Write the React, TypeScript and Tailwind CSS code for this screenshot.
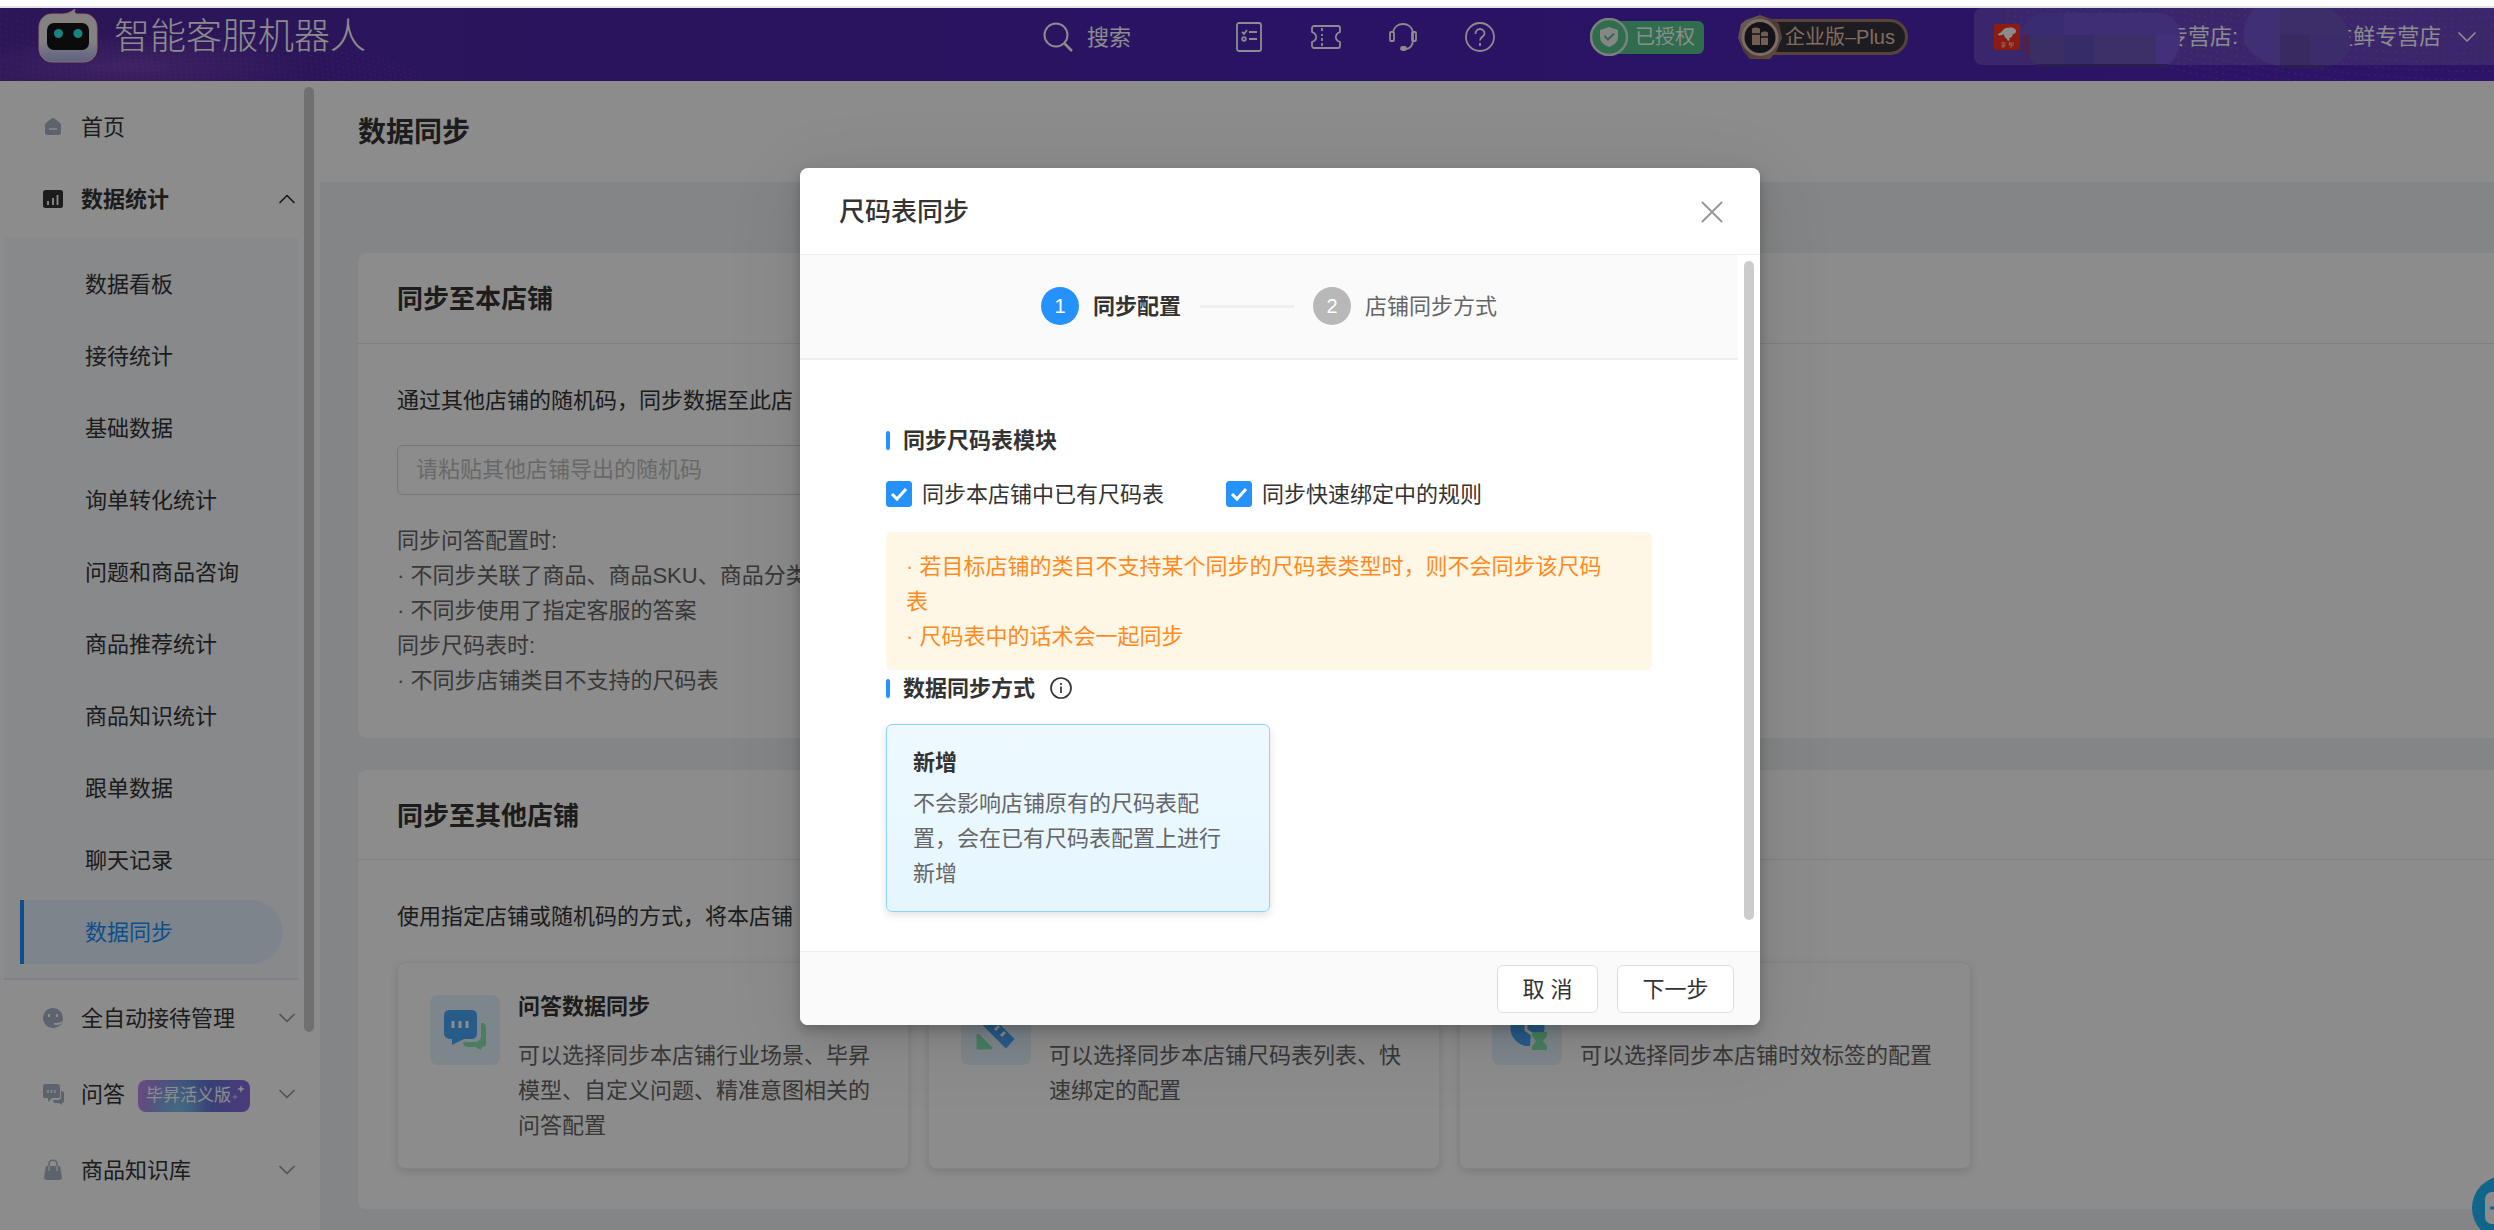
import React from "react";
import { ChevronDown, ChevronUp } from "lucide-react";

const submenu = [
  "数据看板",
  "接待统计",
  "基础数据",
  "询单转化统计",
  "问题和商品咨询",
  "商品推荐统计",
  "商品知识统计",
  "跟单数据",
  "聊天记录",
  "数据同步",
];

function RobotLogo() {
  return (
    <svg className="h-[54px] w-[60px] shrink-0" viewBox="0 0 60 54" aria-hidden="true">
      <defs>
        <linearGradient id="robot" x1="0" y1="0" x2="0" y2="1">
          <stop offset="0" stopColor="#f3ece9" />
          <stop offset="0.6" stopColor="#ededf1" />
          <stop offset="1" stopColor="#a9b2ea" />
        </linearGradient>
      </defs>
      <path
        d="M14 5h9c5 0 9-1 14-5-1 3 0 5 3 5h6c8 0 13 6 13 14v19c0 9-5 15-14 15H15C6 53 1 47 1 38V19C1 11 6 5 14 5Z"
        fill="url(#robot)"
        stroke="#ffc9bd"
        strokeWidth="1"
      />
      <rect x="9" y="14" width="42" height="27" rx="7" fill="#141414" />
      <circle cx="20.500" cy="24.500" r="4.500" fill="#2cf0e6" />
      <circle cx="40" cy="24.500" r="4.500" fill="#2cf0e6" />
    </svg>
  );
}

function HeaderTexture({ side }: { side: "left" | "right" }) {
  const rows = Array.from({ length: 13 }, (_, i) => i);
  const left = side === "left";
  return (
    <svg
      className={
        left
          ? "pointer-events-none absolute top-0 left-0 h-full w-[460px]"
          : "pointer-events-none absolute top-0 right-0 h-full w-[560px]"
      }
      viewBox="0 0 460 73"
      preserveAspectRatio="none"
      aria-hidden="true"
    >
      {rows.map((i) =>
        left ? (
          <path
            key={i}
            d={`M0 ${4 + i * 6}C60 ${14 + i * 6} 100 ${46 + i * 3} 160 ${34 + i * 4}S300 ${16 + i * 6} 420 ${66 + i * 4}`}
            fill="none"
            stroke="#a56bf0"
            strokeOpacity="0.22"
            strokeWidth="1.500"
            strokeDasharray="1.500 4"
          />
        ) : (
          <path
            key={i}
            d={`M60 ${-40 + i * 6}C180 ${-20 + i * 5} 280 ${10 + i * 8} 460 ${i * 9}`}
            fill="none"
            stroke="#b69af5"
            strokeOpacity="0.2"
            strokeWidth="1.500"
            strokeDasharray="1.500 4"
          />
        ),
      )}
    </svg>
  );
}

function ShopButton() {
  return (
    <button
      type="button"
      className="relative flex h-[57px] w-[520px] shrink-0 items-center self-start rounded-l-lg bg-white/15 pl-5 text-[22px] text-white"
    >
      <svg className="size-[26px] shrink-0" viewBox="0 0 26 26" aria-hidden="true">
        <rect width="26" height="26" rx="2" fill="#ff3220" />
        <path
          d="M4 10c2-1 4-2 5-4 3-3 9-3 12-1 2 2 1 5-2 5-1 3-2 4-4 4l1 2-2 1-2-3c-2-1-2-3-2-4-2 1-4 2-6 1Z"
          fill="#fff"
        />
        <path
          d="M7 19h5M9 18v1M8 21h3v1H8ZM9 22v2M15 19h5M16 18l-1 3h5M17 20v4"
          stroke="#ffd9d4"
          strokeWidth="0.8"
          fill="none"
        />
      </svg>
      <span className="ml-[146px] whitespace-nowrap">专营店:</span>
      <span className="ml-[93px] whitespace-nowrap">生鲜专营店</span>
      <ChevronDown className="ml-[10px] size-8 shrink-0" strokeWidth={1.3} aria-hidden="true" />
      <svg className="absolute top-0 left-12 h-[62px] w-[330px]" viewBox="0 0 330 62" aria-hidden="true">
        <defs>
          <clipPath id="blob-a">
            <path d="M20 5H140C152 8 158 18 158 30S152 55 142 59H18C6 50 0 44 0 30S8 8 20 5Z" />
          </clipPath>
          <clipPath id="blob-b">
            <path d="M234 0H304C320 6 328 18 328 36C328 50 312 60 292 60H264C240 56 222 42 222 30S224 6 234 0Z" />
          </clipPath>
        </defs>
        <g clipPath="url(#blob-a)">
          <rect width="160" height="62" fill="#7455d8" />
          <rect width="42" height="27" fill="#6b50d0" />
          <rect y="27" width="10" height="32" fill="#8e3e88" />
          <rect x="8" y="27" width="36" height="32" fill="#6c55b8" />
          <rect x="42" y="27" width="30" height="32" fill="#6250be" />
          <rect x="72" y="27" width="62" height="32" fill="#6f58bf" />
          <rect x="134" y="27" width="26" height="32" fill="#7a58e0" />
          <rect y="56" width="160" height="4" fill="#4b3694" />
        </g>
        <g clipPath="url(#blob-b)">
          <rect x="220" width="110" height="62" fill="#7556cf" />
          <rect x="258" width="70" height="27" fill="#6f53c0" />
          <rect x="258" y="27" width="30" height="35" fill="#684db2" />
          <rect x="288" y="27" width="40" height="35" fill="#6e50c4" />
          <rect x="220" y="57" width="110" height="4" fill="#4b3694" />
        </g>
      </svg>
    </button>
  );
}

function Header() {
  return (
    <header className="relative flex h-[73px] shrink-0 items-start overflow-hidden bg-gradient-to-r from-[#50289f] via-[#4c24b6] to-[#5426bb] text-white">
      <div className="pointer-events-none absolute inset-y-0 left-0 w-[460px] bg-[radial-gradient(ellipse_at_28%_80%,#7440b4_0%,transparent_40%)]" />
      <HeaderTexture side="left" />
      <HeaderTexture side="right" />
      <a href="#home" className="relative flex items-center pl-[38px]">
        <RobotLogo />
        <span className="ml-4 pt-[2px] text-[36px] leading-[54px] font-light whitespace-nowrap">智能客服机器人</span>
      </a>
      <div className="relative ml-auto flex items-center">
        <button type="button" className="flex h-[58px] items-center gap-[14px]">
          <svg className="size-[30px]" viewBox="0 0 30 30" fill="none" stroke="#fff" strokeWidth="2" aria-hidden="true">
            <circle cx="13" cy="13" r="11.500" />
            <path d="m21 21 8 8" strokeWidth="2.500" />
          </svg>
          <span className="text-[22px] whitespace-nowrap">搜索</span>
        </button>
        <div className="ml-[103px] flex items-center gap-[47px]">
          <button type="button" aria-label="任务列表">
            <svg className="size-[30px]" viewBox="0 0 30 30" fill="none" stroke="#fff" strokeWidth="1.800" aria-hidden="true">
              <rect x="3" y="1" width="24" height="28" rx="2" />
              <path d="m8 10 2 2 3-4M15 10h8M15 17h8" />
              <circle cx="10" cy="17" r="1.800" />
            </svg>
          </button>
          <button type="button" aria-label="工单">
            <svg className="size-[30px]" viewBox="0 0 30 30" fill="none" stroke="#fff" strokeWidth="1.800" aria-hidden="true">
              <path d="M3 4h24c1 0 2 1 2 2v4l-2 1c-3 2-3 6 0 8l2 1v4c0 1-1 2-2 2H3c-1 0-2-1-2-2v-4l2-1c3-2 3-6 0-8l-2-1V6c0-1 1-2 2-2Z" />
              <path d="M11 6v3M11 12v2M11 16v3M11 21v3" />
            </svg>
          </button>
          <button type="button" aria-label="客服">
            <svg className="size-[30px]" viewBox="0 0 30 30" fill="none" stroke="#fff" strokeWidth="1.800" aria-hidden="true">
              <path d="M5 10C6 5 10 2 15 2s9 3 10 8v8c0 5-3 9-7 9" />
              <rect x="2" y="10" width="4" height="9" rx="1" />
              <rect x="24" y="10" width="4" height="9" rx="1" />
              <rect x="13" y="25" width="5" height="3" rx="1.500" fill="#fff" />
            </svg>
          </button>
          <button type="button" aria-label="帮助">
            <svg className="size-[30px]" viewBox="0 0 30 30" fill="none" stroke="#fff" strokeWidth="1.800" aria-hidden="true">
              <circle cx="15" cy="15" r="14" />
              <path d="M10.500 12c0-3 2-5 4.500-5s4.500 2 4.500 4.500c0 3-4.500 3.500-4.500 7M15 21v3" />
            </svg>
          </button>
        </div>
        <div className="ml-[95px] flex items-center">
          <svg className="z-10 size-[38px]" viewBox="0 0 38 38" aria-hidden="true">
            <circle cx="19" cy="19" r="18" fill="#56c68c" stroke="#dfe8e3" strokeWidth="2.500" />
            <path d="m19 9 9 3v7c0 5-4 8-9 10-5-2-9-5-9-10v-7Z" fill="#f2f5f3" />
            <path d="m14.500 18 3.500 3.500 6-6" fill="none" stroke="#56c68c" strokeWidth="2" />
          </svg>
          <span className="-ml-4 rounded-md bg-[#56c68c] pr-[9px] pl-[23px] text-[20px] leading-[33px] whitespace-nowrap">
            已授权
          </span>
        </div>
        <div className="ml-[33px] flex items-center">
          <svg className="z-10 h-[46px] w-[46px]" viewBox="0 0 46 46" aria-hidden="true">
            <defs>
              <linearGradient id="bronze" x1="0" y1="0" x2="1" y2="1">
                <stop offset="0" stopColor="#d9c0b1" />
                <stop offset="0.500" stopColor="#8e6a59" />
                <stop offset="1" stopColor="#b78c74" />
              </linearGradient>
            </defs>
            <path d="M23 1 37 6l5 4 3 14-6 14-6 7H13l-6-7L1 24 4 10l5-4Z" fill="url(#bronze)" />
            <circle cx="23" cy="23.500" r="17" fill="#26262c" stroke="#dcc6ba" strokeWidth="3" />
            <path d="M15 15c0-2 7-2 8 0v16h-8ZM24 19c1-2 7-2 7 0v12h-7Z" fill="#d2aa96" />
            <path d="M15 20h8M24 23h7" stroke="#26262c" strokeWidth="1.500" />
          </svg>
          <span className="-ml-5 rounded-r-full border-[3px] border-[#a07a66] bg-[#34333d] pr-[10px] pl-[19px] text-[20px] leading-[30px] whitespace-nowrap text-[#eac5b0]">
            企业版–Plus
          </span>
        </div>
        <div className="ml-[66px] flex h-[58px]">
          <ShopButton />
        </div>
      </div>
    </header>
  );
}

function NavIcon({ name }: { name: "home" | "stats" | "auto" | "qa" | "goods" }) {
  return (
    <svg className="size-[22px] shrink-0" viewBox="0 0 22 22" fill="#a9b4c6" aria-hidden="true">
      {name === "home" && (
        <>
          <path d="M11 2c1 0 2 1 6 4 1 1 2 2 2 3v8c0 1-1 2-3 2H6c-2 0-3-1-3-2V9c0-1 1-2 2-3 4-3 5-4 6-4Z" />
          <path d="M7 13h8" stroke="#f4f6fa" strokeWidth="1.600" />
        </>
      )}
      {name === "stats" && (
        <>
          <rect x="1" y="2" width="20" height="18" rx="2.500" fill="#333" />
          <path d="M6 13v4M11 10v7M15.500 7v10" stroke="#fff" strokeWidth="1.800" />
        </>
      )}
      {name === "auto" && (
        <>
          <path d="M11 1a10 10 0 1 0 6 18c3-1 4-4 4-8A10 10 0 0 0 11 1Z" />
          <path d="M7 7v3M15 7v3" stroke="#fff" strokeWidth="2" />
          <path d="M12 16c3 0 6 0 9-2-1 4-5 4-7 4-2 0-3-1-2-2Z" fill="#fff" />
        </>
      )}
      {name === "qa" && (
        <>
          <path d="M3 1h12c2 0 3 1 3 3v9c0 2-1 2-2 2h-6l-4 4v-4H3c-2 0-2-1-2-2V4c0-2 1-3 2-3Z" />
          <path d="M6 7v3M9.500 7v3M13 7v3" stroke="#fff" strokeWidth="1.500" />
          <path d="M19 8c2 0 3 1 3 2v8c0 1-1 2-2 2v2l-3-2h-4c-1 0-2-1-2-3h5c2 0 3-1 3-3Z" />
        </>
      )}
      {name === "goods" && (
        <>
          <path d="M4 7h14l2 11c0 2-1 3-3 3H5c-2 0-3-1-3-3Z" />
          <path d="M7 12V5c0-5 8-5 8 0v7" fill="none" stroke="#a9b4c6" strokeWidth="1.500" />
          <path d="M7 7v5M15 7v5" stroke="#fff" strokeWidth="1.200" />
        </>
      )}
    </svg>
  );
}

function NavGroup({
  icon,
  label,
  children,
}: {
  icon: "auto" | "qa" | "goods";
  label: string;
  children?: React.ReactNode;
}) {
  return (
    <button type="button" className="flex h-[76px] w-full items-center pr-px pl-[42px] text-left">
      <NavIcon name={icon} />
      <span className="ml-[17px]">{label}</span>
      {children}
      <ChevronDown className="ml-auto size-7 text-[#999]" strokeWidth={1.5} aria-hidden="true" />
    </button>
  );
}

function Sidebar() {
  return (
    <aside className="flex w-80 shrink-0 bg-white text-[22px] text-[#333]">
      <nav className="flex-1 pt-[10px] pl-1 [&>button]:-ml-1 [&>button]:w-[302px]">
        <a href="#home" className="flex h-[72px] items-center pl-[38px]">
          <NavIcon name="home" />
          <span className="ml-[17px]">首页</span>
        </a>
        <button type="button" className="flex h-[72px] items-center pr-px pl-[42px] font-bold">
          <NavIcon name="stats" />
          <span className="ml-[17px]">数据统计</span>
          <ChevronUp className="ml-auto size-7" strokeWidth={1.5} aria-hidden="true" />
        </button>
        <ul className="mt-[2px] w-[294px] border-b-2 border-[#e8ecf5] bg-[#f7f9fc] pt-[11px] pb-[10px]">
          {submenu.map((item) => (
            <li key={item} className="py-1 pl-4">
              <a
                href={`#${item}`}
                aria-current={item === "数据同步" ? "page" : undefined}
                className={
                  item === "数据同步"
                    ? "flex h-16 w-[263px] items-center rounded-r-full border-l-4 border-[#1890ff] bg-[#e4f1ff] pl-[61px] text-[#1890ff]"
                    : "flex h-16 w-[263px] items-center pl-[65px]"
                }
              >
                {item}
              </a>
            </li>
          ))}
        </ul>
        <NavGroup icon="auto" label="全自动接待管理" />
        <NavGroup icon="qa" label="问答">
          <span className="mt-1 ml-[13px] flex h-8 w-28 items-center rounded-lg bg-[radial-gradient(circle_at_35%_95%,#7fc4ee_0%,transparent_45%),linear-gradient(100deg,#c58ae8_0%,#6a8fe4_42%,#6474d8_62%,#8f6ae2_100%)] pl-2 text-[17px] text-white">
            毕昇活义版
            <svg className="mb-2 size-4" viewBox="0 0 16 16" fill="#fff" aria-hidden="true">
              <path d="m10 1 1 3 3 1-3 1-1 3-1-3-3-1 3-1Z" />
              <path d="m4 10 1 2 2 1-2 1-1 2-1-2-2-1 2-1Z" opacity="0.5" />
            </svg>
          </span>
        </NavGroup>
        <NavGroup icon="goods" label="商品知识库" />
      </nav>
      <div className="mt-[6px] mr-[6px] h-[945px] w-[10px] rounded-full bg-[#ccc]" />
    </aside>
  );
}

function CardIcon({ name }: { name: "chat" | "ruler" | "clock" }) {
  return (
    <span className="mt-[6px] flex size-[70px] shrink-0 items-center justify-center rounded-lg bg-[#e3f4fd]">
      <svg className="size-[44px]" viewBox="0 0 44 44" aria-hidden="true">
        {name === "chat" && (
          <>
            <path d="M38 15c4 0 5 2 5 5v15c0 2-1 4-4 4l-1 3-6-3h-6c-4 0-6-2-6-5h11c4 0 7-2 7-6Z" fill="#85e5ad" />
            <path d="M7 2h21c4 0 6 2 6 6v17c0 4-2 6-6 6h-7l-12 6v-6c-5 0-8-2-8-6V8c0-4 2-6 6-6Z" fill="#47a8fb" />
            <path d="M10 13v7M17 13v7M24 13v7" stroke="#fff" strokeWidth="3" />
          </>
        )}
        {name === "ruler" && (
          <>
            <path d="M4 40V27l13 13ZM40 4v10L30 4Z" fill="#85e5ad" stroke="#85e5ad" strokeWidth="3" strokeLinejoin="round" />
            <path d="M12 1 42 31 32 42 2 12Z" fill="#47a8fb" stroke="#e3f4fd" strokeWidth="2" strokeLinejoin="round" />
            <path d="m19 12-4 4m10 2-4 4m10 2-4 4" stroke="#fff" strokeWidth="3" />
          </>
        )}
        {name === "clock" && (
          <>
            <path d="M22 2a18 18 0 1 0 3 36l1-14h13A18 18 0 0 0 22 2Z" fill="#47a8fb" />
            <path d="M21 8v14l7 5" stroke="#fff" strokeWidth="3" fill="none" />
            <path d="M27 24h15v4l-4 5 4 5v4H27v-4l4-5-4-5Z" fill="#85e5ad" />
          </>
        )}
      </svg>
    </span>
  );
}

function SyncCard({ icon, title, text }: { icon: "chat" | "ruler" | "clock"; title: string; text: string }) {
  return (
    <article className="flex w-[512px] gap-[18px] rounded-lg border border-[#f0f0f0] bg-white px-8 pt-[26px] pb-[25px] shadow-[0_3px_8px_rgba(0,0,0,0.12)]">
      <CardIcon name={icon} />
      <div className="min-w-0 flex-1 text-[22px] leading-[35px]">
        <h3 className="font-bold text-[#333]">{title}</h3>
        <p className="mt-[14px] text-[#666]">{text}</p>
      </div>
    </article>
  );
}

function Content() {
  return (
    <main className="min-w-0 flex-1 bg-[#f0f2f5] text-[22px] leading-[35px] text-[#333]">
      <div className="flex h-[101px] items-center bg-white pt-[2px] pl-[38px]">
        <h1 className="text-[28px] font-bold">数据同步</h1>
      </div>
      <div className="flex flex-col gap-8 pt-[71px] pl-[38px]">
        <section className="rounded-l-lg bg-white">
          <h2 className="border-b border-[#e8eaed] pt-[29px] pb-[26px] pl-[39px] text-[26px] font-bold">
            同步至本店铺
          </h2>
          <div className="px-[39px] pt-[39px] pb-10">
            <label htmlFor="random-code" className="block">
              通过其他店铺的随机码，同步数据至此店
            </label>
            <input
              id="random-code"
              type="text"
              placeholder="请粘贴其他店铺导出的随机码"
              className="mt-[27px] block h-[50px] w-full max-w-[1000px] rounded-md border border-[#d9d9d9] bg-white px-[18px] placeholder:text-[#bfbfbf]"
            />
            <div className="mt-7 text-[#666]">
              <p>同步问答配置时:</p>
              <p>· 不同步关联了商品、商品SKU、商品分类</p>
              <p>· 不同步使用了指定客服的答案</p>
              <p>同步尺码表时:</p>
              <p>· 不同步店铺类目不支持的尺码表</p>
            </div>
          </div>
        </section>
        <section className="rounded-l-lg bg-white">
          <h2 className="border-b border-[#e8eaed] pt-[29px] pb-[25px] pl-[39px] text-[26px] font-bold">
            同步至其他店铺
          </h2>
          <div className="px-[39px] pt-[39px] pb-10">
            <p>使用指定店铺或随机码的方式，将本店铺</p>
            <div className="mt-7 flex flex-wrap gap-[19px]">
              <SyncCard
                icon="chat"
                title="问答数据同步"
                text="可以选择同步本店铺行业场景、毕昇模型、自定义问题、精准意图相关的问答配置"
              />
              <SyncCard icon="ruler" title="尺码表同步" text="可以选择同步本店铺尺码表列表、快速绑定的配置" />
              <SyncCard icon="clock" title="时效" text="可以选择同步本店铺时效标签的配置" />
            </div>
          </div>
        </section>
      </div>
    </main>
  );
}

function SectionTitle({ children }: { children: React.ReactNode }) {
  return (
    <h3 className="flex h-[30px] items-center font-bold">
      <span className="mr-[13px] h-[19px] w-1 rounded-sm bg-[#2592fc]" />
      {children}
    </h3>
  );
}

function CheckOption({ id, label }: { id: string; label: string }) {
  return (
    <label htmlFor={id} className="flex h-[30px] items-center gap-[10px]">
      <span className="grid">
        <input
          id={id}
          type="checkbox"
          defaultChecked
          className="peer col-start-1 row-start-1 size-[26px] appearance-none rounded-[3px] border border-[#d9d9d9] bg-white checked:border-[#2592fc] checked:bg-[#2592fc]"
        />
        <svg
          className="pointer-events-none invisible col-start-1 row-start-1 size-[26px] peer-checked:visible"
          viewBox="0 0 26 26"
          fill="none"
          aria-hidden="true"
        >
          <path d="m6 13 5 5 9-10" stroke="#fff" strokeWidth="3" />
        </svg>
      </span>
      {label}
    </label>
  );
}

function SyncDialog() {
  return (
    <div
      role="dialog"
      aria-modal="true"
      aria-labelledby="dialog-title"
      className="flex w-[960px] flex-col overflow-hidden rounded-lg bg-white text-[22px] text-[#333] shadow-[0_10px_26px_rgba(0,0,0,0.12),0_5px_10px_rgba(0,0,0,0.16),0_14px_80px_10px_rgba(0,0,0,0.06)]"
    >
      <div className="flex h-[87px] items-center justify-between border-b border-[#eee] pt-[2px] pr-9 pl-[39px]">
        <h2 id="dialog-title" className="text-[26px] font-medium">
          尺码表同步
        </h2>
        <button type="button" aria-label="关闭">
          <svg className="size-6" viewBox="0 0 24 24" stroke="#999" strokeWidth="2" aria-hidden="true">
            <path d="m2 2 20 20M22 2 2 22" />
          </svg>
        </button>
      </div>
      <div className="flex">
        <div className="min-w-0 flex-1">
          <ol className="flex items-center justify-center border-b-2 border-[#eee] bg-[#fafafa] pt-8 pb-[33px]">
            <li className="flex items-center gap-[14px] font-bold" aria-current="step">
              <span className="flex size-[38px] items-center justify-center rounded-full bg-[#2592fc] text-[20px] font-normal text-white">
                1
              </span>
              同步配置
            </li>
            <li className="mx-[19px] h-[3px] w-[94px] bg-[#eee]" aria-hidden="true" />
            <li className="flex items-center gap-[14px] text-[#666]">
              <span className="flex size-[38px] items-center justify-center rounded-full bg-[#b8b8b8] text-[20px] text-white">
                2
              </span>
              店铺同步方式
            </li>
          </ol>
          <div className="px-[86px] pt-[65px] pb-[39px]">
            <SectionTitle>同步尺码表模块</SectionTitle>
            <div className="mt-6 flex gap-[62px]">
              <CheckOption id="existing" label="同步本店铺中已有尺码表" />
              <CheckOption id="rules" label="同步快速绑定中的规则" />
            </div>
            <div className="mt-[23px] rounded-md bg-[#fff7e6] pt-[17px] pr-10 pb-4 pl-5 leading-[35px] text-[#ff8a1f]">
              <p>· 若目标店铺的类目不支持某个同步的尺码表类型时，则不会同步该尺码表</p>
              <p>· 尺码表中的话术会一起同步</p>
            </div>
            <div className="mt-[3px] flex items-center gap-[15px]">
              <SectionTitle>数据同步方式</SectionTitle>
              <button type="button" aria-label="同步方式说明">
                <svg className="size-[22px]" viewBox="0 0 22 22" fill="none" stroke="#333" strokeWidth="1.700" aria-hidden="true">
                  <circle cx="11" cy="11" r="10" />
                  <path d="M11 9.500V16M11 6v2" />
                </svg>
              </button>
            </div>
            <button
              type="button"
              aria-pressed="true"
              className="mt-[21px] block w-[384px] rounded-md border border-[#8ad4ff] bg-gradient-to-b from-[#eef9ff] to-[#e5f6ff] py-5 pr-10 pl-[26px] text-left leading-[35px] shadow-[0_3px_8px_rgba(0,0,0,0.12)]"
            >
              <span className="block font-bold">新增</span>
              <span className="mt-[6px] block text-[#666]">
                不会影响店铺原有的尺码表配置，会在已有尺码表配置上进行新增
              </span>
            </button>
          </div>
        </div>
        <div className="mx-[6px] mt-[6px] mb-[31px] w-[10px] rounded-full bg-[#ccc]" />
      </div>
      <div className="flex items-center justify-end gap-[19px] border-t border-[#eee] bg-[#fafafa] pt-[13px] pr-[26px] pb-3">
        <button type="button" className="h-12 w-[101px] rounded-md border border-[#ddd] bg-white whitespace-nowrap">
          取 消
        </button>
        <button type="button" className="h-12 w-[117px] rounded-md border border-[#ddd] bg-white whitespace-nowrap">
          下一步
        </button>
      </div>
    </div>
  );
}

export default function App() {
  return (
    <div className="flex h-screen flex-col overflow-hidden bg-white font-['Liberation_Sans','Noto_Sans_CJK_SC',sans-serif]">
      <div className="h-2 shrink-0 border-b-2 border-[#e0e5e1]" />
      <div className="relative flex min-h-0 flex-1 flex-col overflow-hidden">
        <Header />
        <div className="flex min-h-0 flex-1">
          <Sidebar />
          <Content />
        </div>
        <button
          type="button"
          aria-label="在线客服"
          className="absolute -right-[42px] -bottom-[10px] flex size-16 items-center justify-start rounded-full bg-[#20b8fb] pl-[13px]"
        >
          <svg className="h-8 w-9" viewBox="0 0 36 32" aria-hidden="true">
            <rect width="36" height="32" rx="7" fill="#fff" />
            <path d="M5 16h9M22 16h9" stroke="#20b8fb" strokeWidth="3" />
          </svg>
        </button>
        <div className="absolute inset-0 z-20 flex items-start justify-center bg-black/45 pt-40 pl-[66px]">
          <SyncDialog />
        </div>
      </div>
    </div>
  );
}
